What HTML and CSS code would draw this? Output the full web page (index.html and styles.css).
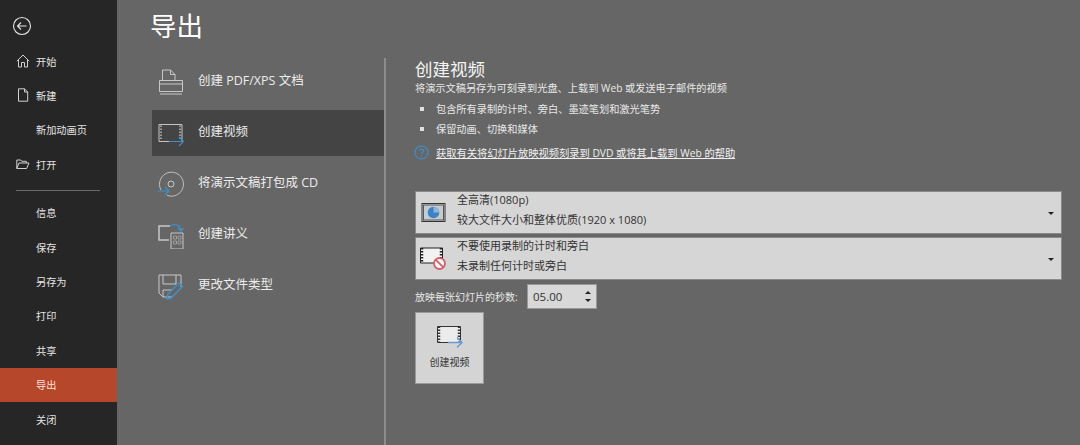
FILE: index.html
```html
<!DOCTYPE html>
<html lang="zh-CN">
<head>
<meta charset="utf-8">
<title>导出</title>
<link rel="stylesheet" href="styles.css">
</head>
<body>
<div class="app">
  <nav class="side">
    <div class="back">
      <svg width="20" height="20" viewBox="0 0 20 20" fill="none" stroke="#e6e6e6" stroke-width="1.1"><circle cx="10" cy="10" r="8.5"/><path d="M14.5 10H5.5M9 6.5 5.5 10 9 13.5"/></svg>
    </div>
    <div class="nav-item"><svg class="nav-icon" width="14" height="14" viewBox="0 0 14 14" fill="none" stroke="#d0d0d0"><path d="M.8 7.2 7 1l6.2 6.2M2.5 6v7h3V8.5h3V13h3V6"/></svg>开始</div>
    <div class="nav-item"><svg class="nav-icon" width="14" height="14" viewBox="0 0 14 14" fill="none" stroke="#d0d0d0"><path d="M2.500.8h6l3.200 3.200v9.200H2.500zM8.500.8V4h3.200"/></svg>新建</div>
    <div class="nav-item">新加动画页</div>
    <div class="nav-item"><svg class="nav-icon" width="14" height="14" viewBox="0 0 14 14" fill="none" stroke="#d0d0d0"><path d="M.8 11.500V3h4l1 1.300h4.500V6M.8 11.500h9.800L13 6H3z"/></svg>打开</div>
    <div class="sep"></div>
    <div class="nav-item">信息</div>
    <div class="nav-item">保存</div>
    <div class="nav-item">另存为</div>
    <div class="nav-item">打印</div>
    <div class="nav-item">共享</div>
    <div class="nav-item active">导出</div>
    <div class="nav-item">关闭</div>
  </nav>
  <main class="main">
    <h1 class="page-title">导出</h1>
    <div class="panes">
      <ul class="options">
        <li class="option">
          <svg class="opt-icon" width="26" height="26" viewBox="0 0 26 26" fill="none" stroke="#c8c8c8"><path d="M4.500 11.500V1h8l4.500 4.500v6M12.500 1v4.500H17M1.500 11.500h23v11h-23zM1.500 15h23M2 25h22"/></svg>
          <span class="opt-label">创建 PDF/XPS 文档</span>
        </li>
        <li class="option selected">
          <svg class="opt-icon" width="26" height="26" viewBox="0 0 26 26" fill="none"><path d="M1 4.500h23v17H1z" stroke="#c4c4c4"/><path d="M3 5.500v15M22 5.500v15" stroke="#b8b8b8" stroke-width="1.500" stroke-dasharray="1.500 1.500"/><path d="M11 21.500h14.500M21 17l4.500 4.500-4.500 4.500" stroke="#3f8fc9" stroke-width="1.200"/></svg>
          <span class="opt-label">创建视频</span>
        </li>
        <li class="option">
          <svg class="opt-icon" width="26" height="26" viewBox="0 0 26 26" fill="none"><path d="M3 19A12 12 0 1 1 9 24.300" stroke="#c0c0c0"/><circle cx="13" cy="13" r="3" stroke="#c8c8c8"/><path d="M0 20h11M7 16l4 4-4 4" stroke="#3f8fc9" stroke-width="1.200"/></svg>
          <span class="opt-label">将演示文稿打包成 CD</span>
        </li>
        <li class="option">
          <svg class="opt-icon" width="26" height="26" viewBox="0 0 26 26" fill="none"><path d="M11 17H1V3h11" stroke="#c8c8c8" stroke-width="1.500"/><path d="M13 10h12v16H13z" stroke="#c8c8c8"/><path d="M15.500 13h3v3h-3zM20 13h3v3h-3zM15.500 18h3v3h-3zM20 18h3v3h-3z" stroke="#aaa" stroke-width=".8"/><path d="M12 3c5-3 10-1 11 4M20 5l3 3 2.500-3" stroke="#3f8fc9" stroke-width="1.200"/></svg>
          <span class="opt-label">创建讲义</span>
        </li>
        <li class="option">
          <svg class="opt-icon" width="26" height="26" viewBox="0 0 26 26" fill="none"><path d="M1 1h22v12M1 1v18l4 4h9" stroke="#c8c8c8"/><path d="M5 1v9h13V1M5 23v-7h9" stroke="#c8c8c8"/><path d="M9 25l1-5L21 9l3.500 3.500L13 24z" stroke="#3f8fc9" stroke-width="1.400"/></svg>
          <span class="opt-label">更改文件类型</span>
        </li>
      </ul>
      <section class="detail">
        <h2 class="detail-title">创建视频</h2>
        <p class="desc">将演示文稿另存为可刻录到光盘、上载到 Web 或发送电子邮件的视频</p>
        <ul class="bullets">
          <li>包含所有录制的计时、旁白、墨迹笔划和激光笔势</li>
          <li>保留动画、切换和媒体</li>
        </ul>
        <div class="help">
          <svg width="15" height="15" viewBox="0 0 15 15" fill="none" stroke="#3f8fc9" stroke-width="1.200"><circle cx="7.500" cy="7.500" r="6.500"/><path d="M5.500 5.800C5.700 3.600 9.700 3.600 9.700 5.800 9.700 7.200 7.500 7.300 7.500 9M7.500 10.300v1.200"/></svg>
          <a class="help-link">获取有关将幻灯片放映视频刻录到 DVD 或将其上载到 Web 的帮助</a>
        </div>
        <div class="select first">
          <svg class="sel-icon" width="24" height="19" viewBox="0 0 24 19"><rect x=".5" y=".5" width="23" height="18" fill="#cfd4d8" stroke="#333"/><rect x="2" y="2" width="20" height="15" fill="#c4ccd2" stroke="#555"/><circle cx="12" cy="9.500" r="5.800" fill="#3d80c4"/><path d="M12 9.500V3.700a5.800 5.800 0 0 1 5.800 5.800z" fill="#8fb5da"/></svg>
          <div class="sel-text"><div>全高清(1080p)</div><div>较大文件大小和整体优质(1920 x 1080)</div></div>
          <span class="caret"></span>
        </div>
        <div class="select">
          <svg class="sel-icon" width="27" height="24" viewBox="0 0 27 24" fill="none"><path d="M.5 1h22v15H.5z" fill="#f2f2f2" stroke="#222"/><path d="M2 1v15M21 1v15" stroke="#222" stroke-width="2.500" stroke-dasharray="1.500 1.500"/><circle cx="19.500" cy="16.500" r="5.500" fill="#f5f5f5" stroke="#d2606c" stroke-width="1.800"/><path d="M15.800 12.800l7.400 7.400" stroke="#d2606c" stroke-width="1.800"/></svg>
          <div class="sel-text"><div>不要使用录制的计时和旁白</div><div>未录制任何计时或旁白</div></div>
          <span class="caret"></span>
        </div>
        <div class="seconds">
          <label class="sec-label">放映每张幻灯片的秒数:</label>
          <div class="spin"><span>05.00</span><span class="spin-arrows"><i class="up"></i><i class="down"></i></span></div>
        </div>
        <div class="create">
          <svg width="26" height="24" viewBox="0 0 26 24" fill="none"><path d="M.5.500h23v16H.5z" fill="#ececec" stroke="#333"/><path d="M2 .5v16M22 .5v16" stroke="#333" stroke-width="2.500" stroke-dasharray="1.500 1.500"/><path d="M11 16.500h14M20 11.500l5 5-5 5" stroke="#6a9ad8" stroke-width="1.500"/></svg>
          <span>创建视频</span>
        </div>
      </section>
    </div>
  </main>
</div>
</body>
</html>
```
FILE: styles.css
```css
* { box-sizing: border-box; }
html, body { margin: 0; height: 100%; overflow: hidden; }
body { font-family: "Open Sans", "Noto Sans CJK SC", "Liberation Sans", sans-serif; background: #666; }
.app { display: flex; width: 1080px; height: 445px; }

.side { width: 117px; flex: none; background: #262626; color: #e4e4e4; font-size: 10.2px; padding-top: 16px; }
.back { height: 20px; margin: 0 0 8px 12px; line-height: 0; }
.nav-item { position: relative; height: 34.4px; padding-left: 36px; display: flex; align-items: center; }
.nav-icon { position: absolute; left: 16px; top: 10px; }
.nav-item.active { background: #b7472a; color: #f6e4de; }
.sep { height: 1px; background: #6a6a6a; margin: 8px 17px 5px 16px; }

.main { flex: 1; min-width: 0; display: flex; flex-direction: column; padding-left: 33px; color: #f0f0f0; }
.page-title { margin: 0; height: 58px; font-size: 26.5px; font-weight: 400; line-height: 52px; color: #fff; }
.panes { flex: 1; display: flex; min-height: 0; }

.options { list-style: none; margin: 0; width: 236px; flex: none; border-right: 2px solid #8c8c8c; padding: 1px 0 0 2px; }
.option { height: 46px; margin: 0 0 5.2px; padding-left: 6px; display: flex; align-items: center; font-size: 12.5px; color: #ececec; }
.option.selected { background: #444; }
.opt-icon { flex: none; margin-right: 14px; }
.opt-label { margin-bottom: 6px; }

.detail { padding: 0 0 0 29px; flex: 1; min-width: 0; }
.detail-title { margin: 0; font-size: 17.5px; font-weight: 400; line-height: 22px; color: #f4f4f4; }
.desc { margin: 0; font-size: 10.2px; line-height: 17px; color: #e8e8e8; white-space: nowrap; }
.bullets { list-style: none; margin: 2px 0 0; padding: 0; font-size: 10.2px; color: #e8e8e8; }
.bullets li { height: 20px; line-height: 20px; padding-left: 21px; position: relative; }
.bullets li::before { content: ""; position: absolute; left: 5px; top: 8px; width: 4px; height: 4px; background: #e0e0e0; }
.help { display: flex; align-items: center; gap: 7px; height: 16px; margin: 5px 0 31px -1px; }
.help-link { font-size: 10.25px; color: #f0f0f0; text-decoration: underline; }

.select { width: 647px; height: 43px; display: flex; align-items: center; background: #d6d6d6; border: 1px solid #8a8a8a; color: #333; font-size: 11px; position: relative; margin-bottom: 3px; }
.sel-icon { flex: none; margin-left: 4px; width: 27px; }
.sel-text { margin-left: 10px; line-height: 20.5px; padding-bottom: 5px; }
.caret { position: absolute; right: 7px; top: 20px; border: 3px solid transparent; border-top: 3px solid #222; border-bottom: 0; }
.seconds { display: flex; align-items: center; height: 25px; margin-top: 4px; }
.sec-label { width: 112px; font-size: 10px; color: #e8e8e8; white-space: nowrap; }
.spin { width: 70px; height: 25px; background: #d8d8d8; border: 1px solid #999; color: #333; font-size: 11.5px; display: flex; align-items: center; justify-content: space-between; padding: 0 5px; }
.spin-arrows { display: flex; flex-direction: column; gap: 5px; }
.spin-arrows i { display: block; border: 3px solid transparent; border-top: 0; border-bottom: 3px solid #222; }
.spin-arrows i.down { border-bottom: 0; border-top: 3px solid #222; }
.create { width: 69px; height: 72px; margin-top: 3px; background: #d4d4d4; border: 1px solid #999; display: flex; flex-direction: column; align-items: center; padding-top: 13px; gap: 4px; font-size: 10px; color: #333; }
```
